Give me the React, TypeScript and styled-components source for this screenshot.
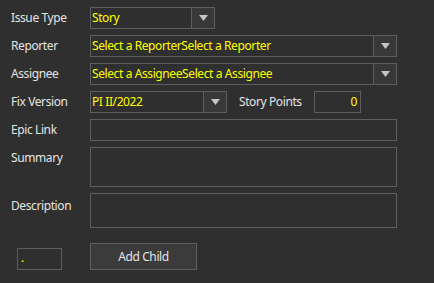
import React from "react";
import styled, { createGlobalStyle } from "styled-components";

const Global = createGlobalStyle`
  html, body { margin: 0; padding: 0; background: #2f2f2f; }
  body { font-family: "Noto Sans", "Open Sans", sans-serif; font-size: 12px; letter-spacing: -0.4px; }
`;

const Form = styled.div`
  width: 434px;
  height: 283px;
  box-sizing: border-box;
  padding: 7px 0 0 11px;
  display: flex;
  flex-direction: column;
  background: #2f2f2f;
`;

const Row = styled.div<{ $mt?: number; $h?: number }>`
  display: flex;
  align-items: flex-start;
  margin-top: ${(p) => p.$mt ?? 6}px;
  height: ${(p) => p.$h ?? 22}px;
`;

const Label = styled.div<{ $w?: number; $pt?: number }>`
  width: ${(p) => p.$w ?? 79}px;
  flex: none;
  color: #e4e4e4;
  line-height: 22px;
  padding-top: ${(p) => p.$pt ?? 0}px;
  white-space: nowrap;
`;

const Combo = styled.div<{ $w: number }>`
  width: ${(p) => p.$w}px;
  height: 22px;
  box-sizing: border-box;
  border: 1px solid #5e5e5e;
  display: flex;
  background: #2f2f2f;
`;

const ComboText = styled.div`
  flex: 1;
  color: #ffff00;
  line-height: 20px;
  padding-left: 1px;
  white-space: nowrap;
  overflow: hidden;
`;

const ComboButton = styled.div`
  width: 22px;
  flex: none;
  border-left: 1px solid #5e5e5e;
  background: #383838;
  display: flex;
  align-items: center;
  justify-content: center;
`;

const Box = styled.div<{ $w: number; $h?: number; $align?: string }>`
  width: ${(p) => p.$w}px;
  height: ${(p) => p.$h ?? 22}px;
  box-sizing: border-box;
  border: 1px solid #5e5e5e;
  color: #ffff00;
  line-height: 20px;
  padding: 0 3px;
  text-align: ${(p) => p.$align ?? "left"};
`;

const SideLabel = styled.div`
  color: #e4e4e4;
  line-height: 22px;
  margin-left: 12px;
  width: 75px;
  white-space: nowrap;
`;

const BottomRow = styled.div`
  display: flex;
  align-items: flex-end;
  margin-top: 15px;
  padding-left: 6px;
  height: 27px;
`;

const SmallBox = styled.div`
  width: 45px;
  height: 22px;
  box-sizing: border-box;
  border: 1px solid #5e5e5e;
  color: #ffff00;
  line-height: 18px;
  padding-left: 3px;
  margin-right: 28px;
`;

const Button = styled.div`
  width: 107px;
  height: 27px;
  box-sizing: border-box;
  border: 1px solid #5e5e5e;
  background: #3b3b3b;
  color: #e4e4e4;
  display: flex;
  align-items: center;
  justify-content: center;
`;

const Arrow = () => (
  <svg width="9" height="6" viewBox="0 0 9 6">
    <polygon points="0,0 9,0 4.5,6" fill="#c4c4c4" />
  </svg>
);

export default function App() {
  return (
    <>
      <Global />
      <Form>
        <Row $mt={0}>
          <Label>Issue Type</Label>
          <Combo $w={125}>
            <ComboText>Story</ComboText>
            <ComboButton><Arrow /></ComboButton>
          </Combo>
        </Row>
        <Row>
          <Label>Reporter</Label>
          <Combo $w={307}>
            <ComboText>Select a ReporterSelect a Reporter</ComboText>
            <ComboButton><Arrow /></ComboButton>
          </Combo>
        </Row>
        <Row>
          <Label>Assignee</Label>
          <Combo $w={307}>
            <ComboText>Select a AssigneeSelect a Assignee</ComboText>
            <ComboButton><Arrow /></ComboButton>
          </Combo>
        </Row>
        <Row>
          <Label>Fix Version</Label>
          <Combo $w={137}>
            <ComboText>PI II/2022</ComboText>
            <ComboButton><Arrow /></ComboButton>
          </Combo>
          <SideLabel>Story Points</SideLabel>
          <Box $w={47} $align="right">0</Box>
        </Row>
        <Row>
          <Label>Epic Link</Label>
          <Box $w={307} />
        </Row>
        <Row $h={40}>
          <Label>Summary</Label>
          <Box $w={307} $h={40} />
        </Row>
        <Row $h={35}>
          <Label $pt={2}>Description</Label>
          <Box $w={307} $h={35} />
        </Row>
        <BottomRow>
          <SmallBox>.</SmallBox>
          <Button>Add Child</Button>
        </BottomRow>
      </Form>
    </>
  );
}
